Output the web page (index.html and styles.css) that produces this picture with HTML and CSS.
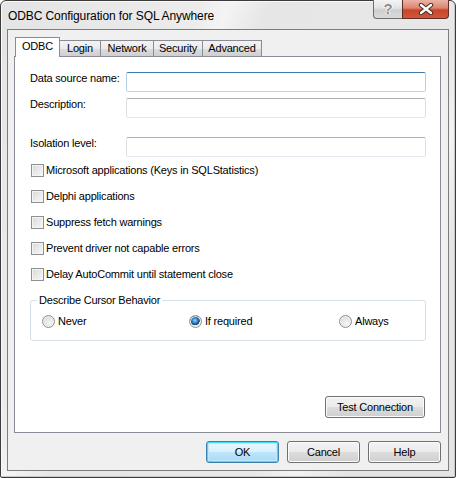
FILE: index.html
```html
<!DOCTYPE html>
<html lang="en">
<head>
    <meta charset="UTF-8">
    <title>ODBC Configuration for SQL Anywhere</title>
    <link rel="stylesheet" href="styles.css">
</head>
<body>
    <div class="window">
        <div class="titlebar">
            <span class="title">ODBC Configuration for SQL Anywhere</span>
            <div class="caption-buttons">
                <div class="cap-btn help">?</div>
                <div class="cap-btn close">
                    <svg width="16" height="12" viewBox="0 0 16 12">
                        <path d="M3 2 L13 10 M13 2 L3 10" stroke="#4a2a22" stroke-width="4.4" stroke-linecap="round"/>
                        <path d="M3 2 L13 10 M13 2 L3 10" stroke="#fff" stroke-width="2.4" stroke-linecap="round"/>
                    </svg>
                </div>
            </div>
        </div>
        <div class="client">
            <div class="tabs">
                <div class="tab active w-odbc">ODBC</div>
                <div class="tab w-login">Login</div>
                <div class="tab w-network">Network</div>
                <div class="tab w-security">Security</div>
                <div class="tab w-advanced">Advanced</div>
            </div>
            <div class="panel">
                <div class="field">
                    <label>Data source name:</label>
                    <div class="textbox focused"></div>
                </div>
                <div class="field second">
                    <label>Description:</label>
                    <div class="textbox"></div>
                </div>
                <div class="field third">
                    <label>Isolation level:</label>
                    <div class="textbox"></div>
                </div>

                <div class="check"><span class="box"></span>Microsoft applications (Keys in SQLStatistics)</div>
                <div class="check"><span class="box"></span>Delphi applications</div>
                <div class="check"><span class="box"></span>Suppress fetch warnings</div>
                <div class="check"><span class="box"></span>Prevent driver not capable errors</div>
                <div class="check"><span class="box"></span>Delay AutoCommit until statement close</div>

                <div class="group">
                    <span class="legend">Describe Cursor Behavior</span>
                    <div class="radio w-never"><span class="dot"></span>Never</div>
                    <div class="radio w-ifreq"><span class="dot on"></span>If required</div>
                    <div class="radio"><span class="dot"></span>Always</div>
                </div>

                <div class="panel-footer">
                    <button class="btn test">Test Connection</button>
                </div>
            </div>
            <div class="dialog-buttons">
                <button class="btn default">OK</button>
                <button class="btn">Cancel</button>
                <button class="btn">Help</button>
            </div>
        </div>
    </div>
</body>
</html>
```

FILE: styles.css
```css
body {
    margin: 0;
    padding: 0;
    background-color: #fff;
    font-family: "Liberation Sans", Arial, sans-serif;
    font-size: 11px;
    letter-spacing: -0.2px;
    color: #000;
}

/* window frame */
.window {
    width: 456px;
    height: 478px;
    box-sizing: border-box;
    border: 1px solid #3b3b3b;
    border-radius: 6px 6px 2px 2px;
    padding: 0 6px 6px 6px;
    background: linear-gradient(115deg, #e4e4e4 0%, #ececec 30%, #f4f4f4 34%, #e6e6e6 40%, #e8e8e8 70%, #f3f3f3 76%, #e4e4e4 84%);
    box-shadow: inset 1px 1px 0 #fafafa, inset -1px -1px 0 #c8c8c8;
}

.titlebar {
    height: 28px;
    margin: 0 0 0 1px;
    display: flex;
    justify-content: space-between;
    align-items: flex-start;
}
.title {
    font-size: 12px;
    letter-spacing: -0.1px;
    line-height: 16px;
    margin-top: 7px;
    color: #000;
}
.caption-buttons {
    display: flex;
    margin-top: -1px;
}
.cap-btn {
    height: 19px;
    box-sizing: border-box;
    border: 1px solid #6e6e6e;
    border-top: none;
    display: flex;
    align-items: center;
    justify-content: center;
}
.help {
    width: 29px;
    border-right: none;
    border-radius: 0 0 0 4px;
    background: linear-gradient(#f4f4f4 0%, #e2e2e2 45%, #cfcfcf 55%, #dadada 100%);
    font-size: 15px;
    font-weight: bold;
    color: #8c8c8c;
    text-shadow: 0 0 1px #fff, 1px 0 0 #fff, -1px 0 0 #fff;
    line-height: 18px;
}
.close {
    width: 47px;
    border-color: #5e2f26;
    border-radius: 0 0 4px 0;
    background: linear-gradient(#eab3a6 0%, #dd8470 45%, #c9452b 55%, #d0573d 100%);
}

/* client area */
.client {
    width: 440px;
    height: 440px;
    border: 1px solid #7d7d7d;
    background: #f0f0f0;
    display: flex;
    flex-direction: column;
}

.tabs {
    display: flex;
    align-items: flex-end;
    height: 19px;
    margin: 7px 0 0 7px;
}
.tab {
    box-sizing: border-box;
    height: 16px;
    border: 1px solid #898c95;
    border-bottom: none;
    margin-left: -1px;
    background: linear-gradient(#f3f3f3 0%, #ebebeb 50%, #dddddd 51%, #cfcfcf 100%);
    text-align: center;
    line-height: 15px;
}
.tab.active {
    height: 20px;
    margin-left: 0;
    margin-bottom: -1px;
    background: #fff;
    line-height: 17px;
    position: relative;
    z-index: 1;
}
.tab.active + .tab {
    margin-left: -1px;
}
.w-odbc { width: 45px; }
.w-login { width: 42px; }
.w-network { width: 54px; }
.w-security { width: 50px; }
.w-advanced { width: 60px; }

.panel {
    box-sizing: border-box;
    width: 427px;
    height: 377px;
    margin-left: 6px;
    border: 1px solid #898c95;
    background: #fff;
    padding: 15px 14px 14px 15px;
    display: flex;
    flex-direction: column;
}

.field {
    display: flex;
    justify-content: space-between;
    height: 20px;
}
.field.second { margin-top: 6px; }
.field.third { margin-top: 19px; }
.field label {
    line-height: 13px;
    margin-top: 0;
}
.textbox {
    width: 300px;
    height: 20px;
    box-sizing: border-box;
    border: 1px solid #dbdfe6;
    border-top-color: #abadb3;
    border-bottom-color: #e3e9ef;
    border-radius: 2px;
    background: #fff;
}
.textbox.focused {
    border-color: #569de5;
    border-top-color: #3d7bad;
    border-left-color: #b5cfe7;
    border-right-color: #b5cfe7;
    border-bottom-color: #b7d9ed;
}

.check {
    height: 26px;
    display: flex;
    align-items: center;
}
.box {
    width: 13px;
    height: 13px;
    box-sizing: border-box;
    margin: 0 2px 0 1px;
    border: 1px solid #8e8f8f;
    background: linear-gradient(135deg, #d8d8d8 0%, #ececec 60%, #f8f8f8 100%);
    box-shadow: inset 0 0 0 1px #f4f4f4;
}

.group {
    position: relative;
    margin-top: 13px;
    width: 396px;
    height: 41px;
    box-sizing: border-box;
    border: 1px solid #d5dfe5;
    border-radius: 3px;
    padding: 0 0 0 11px;
    display: flex;
    align-items: center;
}
.legend {
    position: absolute;
    top: -8px;
    left: 6px;
    padding: 0 2px;
    background: #fff;
    line-height: 14px;
}
.radio {
    display: flex;
    align-items: center;
    margin-top: 1px;
}
.w-never { width: 147px; }
.w-ifreq { width: 150px; }
.dot {
    width: 13px;
    height: 13px;
    box-sizing: border-box;
    margin-right: 3px;
    border: 1px solid #8e8f8f;
    border-radius: 50%;
    background: radial-gradient(circle at 60% 65%, #f6f6f6 0%, #e2e2e2 55%, #cdcdcd 100%);
    box-shadow: inset 0 0 0 1px #f2f2f2;
}
.dot.on {
    background: radial-gradient(circle at 45% 40%, #9fd3f8 0%, #2c7fc6 30%, #143f75 52%, #e8e8e8 56%, #d6d6d6 100%);
}

.panel-footer {
    margin-top: auto;
    display: flex;
    justify-content: flex-end;
    padding-right: 1px;
}

.btn {
    font-family: "Liberation Sans", Arial, sans-serif;
    font-size: 11px;
    letter-spacing: -0.2px;
    color: #000;
    height: 22px;
    width: 73px;
    padding: 0;
    box-sizing: border-box;
    border: 1px solid #707070;
    border-radius: 3px;
    background: linear-gradient(#f2f2f2 0%, #ebebeb 50%, #dddddd 51%, #cfcfcf 100%);
    box-shadow: inset 0 0 0 1px #fcfcfc;
}
.btn.test { width: 100px; }
.btn.default {
    border-color: #3c7fb1;
    box-shadow: inset 0 0 0 1px #48d8fb, inset 0 0 0 2px #bfe9f8;
    background: linear-gradient(#eaf6fd 0%, #d9f0fc 50%, #bee6fd 51%, #a7d9f5 100%);
}

.dialog-buttons {
    display: flex;
    justify-content: flex-end;
    gap: 8px;
    margin: 8px 7px 0 0;
}
```
